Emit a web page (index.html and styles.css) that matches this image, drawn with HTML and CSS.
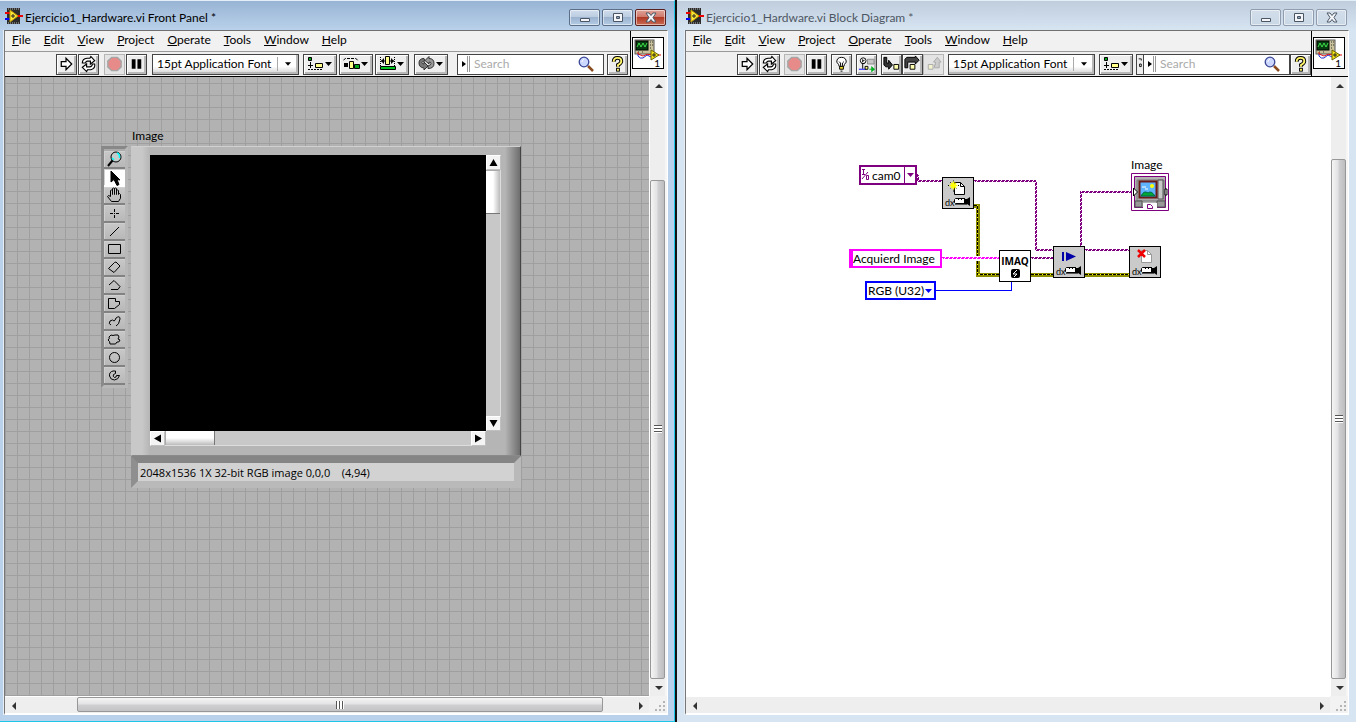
FILE: index.html
```html
<!DOCTYPE html>
<html lang="en">
<head>
<meta charset="utf-8">
<title>Ejercicio1_Hardware.vi</title>
<link rel="stylesheet" href="styles.css">
</head>
<body>
<svg class="sprite" aria-hidden="true">
  <symbol id="app" viewBox="0 0 18 16">
    <rect x="2" y="0" width="13" height="16" fill="#2b2b2b"/>
    <path d="M3 1h11M3 15h11" stroke="#bbb" stroke-dasharray="1 1"/>
    <path d="M0 11h6" stroke="#00f" stroke-width="2"/>
    <path d="M0 5h6M11 8h7" stroke="#e00" stroke-width="2"/>
    <path d="M5 2l8 6-8 6z" fill="#ffe93b" stroke="#b90"/>
    <path d="M6 8h4M8 6v4" stroke="#222"/>
  </symbol>
  <symbol id="vi" viewBox="0 0 30 30">
    <rect x="2" y="2" width="19" height="14" fill="#c9c29a" stroke="#555"/>
    <rect x="3" y="3" width="12" height="9" fill="#063c10" stroke="#000"/>
    <path d="M4 9l2-4 2 4 2-4 2 4 2-4" fill="none" stroke="#3fe04a"/>
    <path d="M17 4h1M17 7h1M17 10h1M19 4h1M19 7h1M5 14h1M9 14h1" stroke="#333" stroke-width="1"/>
    <path d="M5 16v2q2 3 5 2l4-3 4 2" fill="none" stroke="#1d2fd0"/>
    <path d="M5 14v2l5 2q4-3 9-1h9" fill="none" stroke="#e01010"/>
    <path d="M18 12l8 5-8 5z" fill="#f5e616" stroke="#6b6300"/>
    <path d="M19 17h4M21 15v4" stroke="#222"/>
  </symbol>
  <symbol id="run" viewBox="0 0 20 20"><path d="M4.500 7.500h5v-3.500l6 6-6 6v-3.500h-5z" fill="#fff" stroke="#000" stroke-width="1.300"/></symbol>
  <symbol id="cont" viewBox="0 0 20 20">
    <path d="M3.500 9q0-4.500 5-5h3l1-2 4 4.500-4.500 3.500v-3H9q-2 0-2 2z" fill="#fff" stroke="#000" stroke-width="1.200"/>
    <path d="M16.500 10q1 5-4 6H9l-1 2-4.500-4.500L8 10v3h3q3 0 3-3z" fill="#fff" stroke="#000" stroke-width="1.200"/>
  </symbol>
  <symbol id="stop" viewBox="0 0 20 20"><path d="M7 3h6l4 4v6l-4 4H7l-4-4V7z" fill="#e68a8a" stroke="#a5a5a5" stroke-width="1.500"/></symbol>
  <symbol id="pause" viewBox="0 0 20 20"><path d="M5 5h4v10H5zM11 5h4v10h-4z"/></symbol>
  <symbol id="caret" viewBox="0 0 7 4"><path d="M0 0h7L3.500 4z"/></symbol>
  <symbol id="align" viewBox="0 0 32 20">
    <path d="M4.500 3.500h3v3h-3z" fill="#00a51e" stroke="#000"/>
    <path d="M6.500 8v6M4 11.500h5" stroke="#000"/><path d="M4 15.500h15" stroke="#000" stroke-dasharray="2 1"/>
    <path d="M11.500 9.500h7v4h-7z" fill="#ffff8a" stroke="#000"/><path d="M21 8h7l-3.500 4z"/>
  </symbol>
  <symbol id="dist" viewBox="0 0 32 20">
    <path d="M3.500 6l2-1.500h10l3 2" fill="none" stroke="#000" stroke-dasharray="3 1"/><path d="M4 9h4v4H4z"/>
    <path d="M9.500 7.500h4v7h-4z" fill="#ffff8a" stroke="#000"/><path d="M14.500 10.500h5v4h-5z" fill="#00a51e" stroke="#000"/><path d="M21 8h7l-3.500 4z"/>
  </symbol>
  <symbol id="size" viewBox="0 0 32 20">
    <path d="M4.500 3v9M18.500 3v9" stroke="#000" stroke-dasharray="1 1"/>
    <path d="M5 7h13" stroke="#000"/><path d="M8 4v6L5 7zM15 4v6l3-3z"/><path d="M9.500 2.500h4v8h-4z" fill="#ffff8a" stroke="#000"/>
    <path d="M4.500 12.500h15v3h-15z" fill="#00c41e" stroke="#000"/><path d="M21 8h7l-3.500 4z"/>
  </symbol>
  <symbol id="order" viewBox="0 0 32 20">
    <path d="M9 4.500q-5 0-5 4.500t5 5v2l4-4-4-4v2q-2 0-2-1.500T10 7z" fill="#777" stroke="#333"/>
    <path d="M13 14.500q6 0 6-5t-5-5v-2l-4 4 4 3.500v-2q2 0 2 1.500T13 12z" fill="#999" stroke="#333"/>
    <path d="M21 8h7l-3.500 4z"/>
  </symbol>
  <symbol id="bulb" viewBox="0 0 20 20">
    <path d="M7.500 12.500q0-2-2.500-4.500 0-5 5-5t5 5q-2.500 2.500-2.500 4.500z" fill="#fff" stroke="#000"/>
    <path d="M9 12V9L7.500 7.500M11 12V9l1.500-1.500" fill="none" stroke="#000"/><path d="M8 12.500h4v3H8z" fill="#f0dc28" stroke="#000"/><path d="M9 17.500h2" stroke="#000"/>
  </symbol>
  <symbol id="retain" viewBox="0 0 20 20">
    <circle cx="6.500" cy="6.500" r="3" fill="#fff" stroke="#000"/><path d="M6 5v3M8 6l-2 1M6 10v5M5 9.500h3" stroke="#000"/>
    <path d="M11 5h7v5h-7z" fill="#c6c6c6" stroke="#888"/><path d="M2 15.500h8" stroke="#00f"/><path d="M8.500 12.500h3v3h-3z" fill="#ff8" stroke="#000"/><path d="M13 15.500h3" stroke="#0a0"/><path d="M15 12l4 3.500-4 3.500z" fill="#00b020"/>
  </symbol>
  <symbol id="into" viewBox="0 0 20 20"><path d="M2 3h3v6h2V6l4 5-4 4.500V13H4l-2-2z" fill="#333" stroke="#000"/><path d="M12.500 10.500h5v5h-5z" fill="#ffffb0" stroke="#000"/></symbol>
  <symbol id="over" viewBox="0 0 20 20"><path d="M2 14V5l2-2h9V1.500L17 6l-4 4V8H5v6z" fill="#444" stroke="#000"/><path d="M7.500 10.500h5v5h-5z" fill="#ffffb0" stroke="#000"/></symbol>
  <symbol id="out" viewBox="0 0 20 20"><path d="M4.500 10.500h5v5h-5z" fill="#f2f2cf" stroke="#aaa"/><path d="M11 14h5V8h2l-4-5-4 5h2v3h-1z" fill="#ccc" stroke="#aaa"/></symbol>
  <symbol id="find" viewBox="0 0 16 16"><path d="M10 10l5 5" stroke="#8a4b20" stroke-width="2.500"/><circle cx="6" cy="6" r="4.800" fill="#ccd8ff" stroke="#3b4796" stroke-width="1.300"/><path d="M4 6q0-2 2-3" fill="none" stroke="#fff"/></symbol>
  <symbol id="help" viewBox="0 0 20 20">
    <path d="M6 7.500q0-4 4-4t4 3.500q0 2-3.500 4v2" fill="none" stroke="#000" stroke-width="4"/><path d="M8.500 14h4v4h-4z"/>
    <path d="M6 7.500q0-4 4-4t4 3.500q0 2-3.500 4v2M10.500 15v2" fill="none" stroke="#fff56b" stroke-width="2"/>
  </symbol>
  <symbol id="cam" viewBox="0 0 32 32">
    <path d="M13.500 21.500h9v5h-9l-1-1v-3z" fill="#fff" stroke="#000"/><path d="M16 22.500h1M19 22.500h1" stroke="#000"/><path d="M22 21h1v1h2l3-2v9l-3-2h-2v1h-1z"/><path d="M13 27.500h12" stroke="#555"/>
  </symbol>
  <symbol id="page" viewBox="0 0 12 14"><path d="M.5.500h6l4 4v8H.5z" fill="#fff" stroke="currentColor"/><path d="M6.500.500v4h4" fill="none" stroke="currentColor"/></symbol>
</svg>

<main class="desktop">
<section class="window front">
  <header class="titlebar">
    <svg class="app"><use href="#app"/></svg><h1>Ejercicio1_Hardware.vi Front Panel *</h1>
    <div class="caption">
      <button aria-label="Minimize"><svg viewBox="0 0 12 12"><path d="M1.500 6.500h9v3h-9z"/></svg></button>
      <button aria-label="Maximize"><svg viewBox="0 0 12 12"><path d="M1.500 1.500h9v8h-9z"/><path d="M4.500 4.500h3v2h-3z" class="hole"/></svg></button>
      <button class="close" aria-label="Close"><svg viewBox="0 0 12 12"><path d="M1 1h3l2 2.500L8 1h3L8 5.500 11 10H8L6 7.500 4 10H1l3-4.500z"/></svg></button>
    </div>
  </header>
  <div class="client">
    <div class="head">
      <div class="bars">
        <nav class="menu"><button><u>F</u>ile</button><button><u>E</u>dit</button><button><u>V</u>iew</button><button><u>P</u>roject</button><button><u>O</u>perate</button><button><u>T</u>ools</button><button><u>W</u>indow</button><button><u>H</u>elp</button></nav>
        <div class="tools">
          <div class="set"><button class="tb" aria-label="Run"><svg><use href="#run"/></svg></button><button class="tb" aria-label="Run continuously"><svg><use href="#cont"/></svg></button></div>
          <div class="set"><button class="tb off" aria-label="Abort" disabled><svg><use href="#stop"/></svg></button><button class="tb" aria-label="Pause"><svg><use href="#pause"/></svg></button></div>
          <div class="font"><select aria-label="Font"><option>15pt Application Font</option></select><svg class="caret"><use href="#caret"/></svg></div>
          <div class="set wideset"><button class="tb wide" aria-label="Align"><svg><use href="#align"/></svg></button><button class="tb wide" aria-label="Distribute"><svg><use href="#dist"/></svg></button><button class="tb wide" aria-label="Resize"><svg><use href="#size"/></svg></button></div>
          <button class="tb wide" aria-label="Reorder"><svg><use href="#order"/></svg></button>
          <div class="search"><button aria-label="Search options"><svg viewBox="0 0 12 18"><path d="M4 6l4 3-4 3z"/><path d="M9.500 1v16M11.500 1v16" stroke="#999"/></svg></button><input type="search" placeholder="Search" aria-label="Search"><svg class="find"><use href="#find"/></svg></div>
          <button class="tb" aria-label="Help"><svg><use href="#help"/></svg></button>
        </div>
      </div>
      <div class="pane"><div class="vi"><svg><use href="#vi"/></svg><span>1</span></div></div>
    </div>
    <div class="view">
      <div class="canvas grid">
        <div class="viewer">
          <span class="label">Image</span>
          <div class="palette">
            <button aria-label="Zoom"><svg viewBox="0 0 21 18"><circle cx="12" cy="7" r="5" fill="#c4cccc"/><path d="M13 3q3 1 2.500 5M8 8l2 2" stroke="#0ff" stroke-width="1.500"/><path d="M8.500 10.500L4 16" stroke-width="2"/></svg></button>
            <button class="on" aria-label="Select"><svg viewBox="0 0 21 18"><path d="M7 3v11l3-2.500 3 6 2-1-2-5 3 .5z" fill="#000"/></svg></button>
            <button aria-label="Pan"><svg viewBox="0 0 21 18"><path d="M7.500 15.500l-4-5q1-2 3 0v-6q1-1 2 0v4-6q1-1 2 0v6-6q1-1 2 0v6-4q1-1 2 0v4q1-2 2 0 1 4-2 7z"/></svg></button>
            <button aria-label="Point"><svg viewBox="0 0 21 18"><path d="M6 9.500h3M12 9.500h3M10.500 5v3M10.500 11v3M10 9.500h1"/></svg></button>
            <button aria-label="Line"><svg viewBox="0 0 21 18"><path d="M6 14l9-9"/></svg></button>
            <button aria-label="Rectangle"><svg viewBox="0 0 21 18"><path d="M4.500 4.500h12v9h-12z"/></svg></button>
            <button aria-label="Rotated rectangle"><svg viewBox="0 0 21 18"><path d="M4.500 10.500l6-6 1.500-.5 4 4-6 6.500z"/></svg></button>
            <button aria-label="Broken line"><svg viewBox="0 0 21 18"><path d="M5 9l5-4.500 6 6-2 3H7"/></svg></button>
            <button aria-label="Polygon"><svg viewBox="0 0 21 18"><path d="M4.500 4.500h7v3h4v3l-5 4h-6z"/></svg></button>
            <button aria-label="Freehand line"><svg viewBox="0 0 21 18"><path d="M7 13q-3-1-1-4 3-2 4 0 1 0 2-3 4-3 4 1-1 6-4 7"/></svg></button>
            <button aria-label="Freehand region"><svg viewBox="0 0 21 18"><path d="M7 5q2 1 4 0 4-1 4 2l-1 2 2 1q-1 3-3 2-1 3-4 2H6q0-3-2-4 2-1 1-3z"/></svg></button>
            <button aria-label="Oval"><svg viewBox="0 0 21 18"><circle cx="10.500" cy="9.500" r="5"/></svg></button>
            <button aria-label="Annulus"><svg viewBox="0 0 21 18"><path d="M9 5q-4 1-3.500 5 1 4 5 4 4-.5 5-4.500h-3q0 2-2 2-2-1-1-3l2-1V5z"/></svg></button>
          </div>
          <div class="display">
            <div class="screen"></div>
            <div class="sb vert"><button aria-label="Up"><svg viewBox="0 0 15 15"><path d="M7.500 4l4 7h-8z"/></svg></button><div class="knob"></div><div class="track"></div><button aria-label="Down"><svg viewBox="0 0 15 15"><path d="M3.500 4h8l-4 7z"/></svg></button></div>
            <div class="sb horz"><button aria-label="Left"><svg viewBox="0 0 15 15"><path d="M4 7.500l7-4v8z"/></svg></button><div class="knob"></div><div class="track"></div><button aria-label="Right"><svg viewBox="0 0 15 15"><path d="M11 7.500l-7-4v8z"/></svg></button></div>
          </div>
          <output class="status">2048x1536 1X 32-bit RGB image 0,0,0 &nbsp;&nbsp; (4,94)</output>
        </div>
      </div>
      <div class="bar down"><button aria-label="Scroll up"><svg viewBox="0 0 8 6"><path d="M0 5h8L4 1z"/></svg></button><span class="before"></span><span class="thumb"><i></i></span><button aria-label="Scroll down"><svg viewBox="0 0 8 6"><path d="M0 1h8L4 5z"/></svg></button></div>
      <div class="bar across"><button aria-label="Scroll left"><svg viewBox="0 0 6 8"><path d="M5 0v8L1 4z"/></svg></button><span class="before"></span><span class="thumb"><i></i></span><span class="after"></span><button aria-label="Scroll right"><svg viewBox="0 0 6 8"><path d="M1 0v8l4-4z"/></svg></button></div>
      <svg class="resize" viewBox="0 0 18 17"><path d="M14 6h2M10 10h2M14 10h2M6 14h2M10 14h2M14 14h2" stroke="#b5b5b5" stroke-width="2"/></svg>
    </div>
  </div>
</section>

<section class="window block">
  <header class="titlebar">
    <svg class="app"><use href="#app"/></svg><h1>Ejercicio1_Hardware.vi Block Diagram *</h1>
    <div class="caption">
      <button aria-label="Minimize"><svg viewBox="0 0 12 12"><path d="M1.500 6.500h9v3h-9z"/></svg></button>
      <button aria-label="Maximize"><svg viewBox="0 0 12 12"><path d="M1.500 1.500h9v8h-9z"/><path d="M4.500 4.500h3v2h-3z" class="hole"/></svg></button>
      <button aria-label="Close"><svg viewBox="0 0 12 12"><path d="M1 1h3l2 2.500L8 1h3L8 5.500 11 10H8L6 7.500 4 10H1l3-4.500z"/></svg></button>
    </div>
  </header>
  <div class="client">
    <div class="head">
      <div class="bars">
        <nav class="menu"><button><u>F</u>ile</button><button><u>E</u>dit</button><button><u>V</u>iew</button><button><u>P</u>roject</button><button><u>O</u>perate</button><button><u>T</u>ools</button><button><u>W</u>indow</button><button><u>H</u>elp</button></nav>
        <div class="tools">
          <div class="set"><button class="tb" aria-label="Run"><svg><use href="#run"/></svg></button><button class="tb" aria-label="Run continuously"><svg><use href="#cont"/></svg></button></div>
          <div class="set"><button class="tb off" aria-label="Abort" disabled><svg><use href="#stop"/></svg></button><button class="tb" aria-label="Pause"><svg><use href="#pause"/></svg></button></div>
          <button class="tb" aria-label="Highlight execution"><svg><use href="#bulb"/></svg></button>
          <button class="tb" aria-label="Retain wire values"><svg><use href="#retain"/></svg></button>
          <div class="set steps"><button class="tb" aria-label="Step into"><svg><use href="#into"/></svg></button><button class="tb" aria-label="Step over"><svg><use href="#over"/></svg></button><button class="tb off" aria-label="Step out" disabled><svg><use href="#out"/></svg></button></div>
          <div class="font"><select aria-label="Font"><option>15pt Application Font</option></select><svg class="caret"><use href="#caret"/></svg></div>
          <button class="tb wide" aria-label="Align"><svg><use href="#align"/></svg></button>
          <button class="tb cut" aria-label="Distribute"><svg viewBox="0 0 7 20"><path d="M2 4h3v2M3 10h2v3H3z" fill="none" stroke="#000"/></svg></button>
          <div class="search"><button aria-label="Search options"><svg viewBox="0 0 12 18"><path d="M4 6l4 3-4 3z"/><path d="M9.500 1v16M11.500 1v16" stroke="#999"/></svg></button><input type="search" placeholder="Search" aria-label="Search"><svg class="find"><use href="#find"/></svg></div>
          <button class="tb" aria-label="Help"><svg><use href="#help"/></svg></button>
        </div>
      </div>
      <div class="pane"><div class="vi"><svg><use href="#vi"/></svg><span>1</span></div></div>
    </div>
    <div class="view">
      <div class="canvas">
        <div class="diagram">
          <svg class="wires" viewBox="846 157 330 150">
            <g fill="none" stroke="#7f007f" stroke-dasharray="3 1" shape-rendering="crispEdges">
              <g id="w"><path d="M917.500 174v6.500H942M974 180.500h61.500v69H1053M1031 257.500h22M1080.500 246v-54.500H1131M1085 249.500h44"/><path d="M942 257.500h57" stroke="#f0f"/></g>
              <use href="#w" x="1" y="1" stroke-dashoffset="2"/>
            </g>
            <g fill="none" shape-rendering="crispEdges">
              <path d="M974 205.500h3.500V256M977.500 261v13.500M976 274.500h23M1031 274.500h22M1085 274.500h44" stroke="#8c8c00" stroke-width="4"/>
              <path d="M974 205.500h3.500V256M977.500 261v13.500M978 274.500h21M1031 274.500h22M1085 274.500h44" stroke="#ff0"/>
              <path d="M974 205.500h3.500V256M977.500 261v13.500M980 274.500h19M1031 274.500h22M1085 274.500h44" stroke="#000" stroke-dasharray="3 1"/>
              <path d="M936 290.500h75.500V282" stroke="#00f"/>
            </g>
          </svg>
          <div class="ring io"><svg class="iomark" viewBox="0 0 9 12"><path d="M1 .5h3M2.500 0v6M1 5.500h3M1 10l6-7M5.500 6.500h2v4h-2z" fill="none" stroke="#7f007f"/></svg><select aria-label="Camera"><option>cam0</option></select><svg class="caret"><use href="#caret"/></svg></div>
          <div class="node open"><svg viewBox="0 0 32 32"><use href="#page" x="12" y="5" width="12" height="14"/><path d="M11.500 3.500v11M6 8.500h11M8 5l7 7M15 5l-7 7" stroke="#000" stroke-dasharray="1 1"/><path d="M11.500 4.500v8M7.500 8.500h8M9 6l5 5M14 6l-5 5" stroke="#ff0" stroke-width="1.500"/><use href="#cam"/><text x="3" y="29">dx</text></svg></div>
          <div class="node imaq"><b>IMAQ</b><svg viewBox="0 0 10 10"><rect x="1" width="9" height="9" rx="2"/><path d="M7 1L3 5h4L4 8" fill="none" stroke="#fff"/></svg></div>
          <div class="node snap"><svg viewBox="0 0 32 32"><path d="M9 6h2v9H9zM13 6l10 4.500L13 15z" fill="#0000a8"/><use href="#cam"/><text x="3" y="29">dx</text></svg></div>
          <div class="node shut"><svg viewBox="0 0 32 32"><g color="#999"><use href="#page" x="12" y="4" width="12" height="14"/></g><path d="M9 4l7 7M16 4l-7 7" stroke="#f00000" stroke-width="2.500"/><use href="#cam"/><text x="3" y="29">dx</text></svg></div>
          <input class="text" aria-label="Image name" value="Acquierd Image">
          <div class="ring enum"><select aria-label="Image type"><option>RGB (U32)</option></select><svg class="caret"><use href="#caret"/></svg></div>
          <span class="name">Image</span>
          <svg class="terminal" viewBox="0 0 38 38">
            <path d="M.5.5h37v37H.5z" fill="#fff" stroke="#7f007f"/><path d="M3.500 3.500h31v31h-31z" fill="#b4b4b4" stroke="#7f007f"/>
            <path d="M6 7h27v21H6z" fill="#aaa" stroke="#777"/><path d="M27 7h5v19h-5z" fill="#c8c8c8" stroke="#555"/><path d="M4 28h7v6H4zM26 28h8v6h-8z" fill="#999" stroke="#555"/>
            <path d="M8.500 8.500h17v16h-17z" fill="#5eb4ff" stroke="#6b1818" stroke-width="2"/><circle cx="21" cy="13" r="2" fill="#ff0"/><path d="M10 23q3-6 7-3 3-3 7 3z" fill="#00a838" stroke="#064"/><path d="M11 14h4M14 16h3" stroke="#fff"/>
            <path d="M12 30h14v5H12z" fill="#fff"/><path d="M16.500 31.500h3l2 2v2h-5z" fill="#fff" stroke="#7f007f"/><path d="M2.500 15l4 4-4 4zM34 16h2v6h-2z" fill="#fff" stroke="#000"/>
          </svg>
        </div>
      </div>
      <div class="bar down"><button aria-label="Scroll up"><svg viewBox="0 0 8 6"><path d="M0 5h8L4 1z"/></svg></button><span class="before"></span><span class="thumb"><i></i></span><button aria-label="Scroll down"><svg viewBox="0 0 8 6"><path d="M0 1h8L4 5z"/></svg></button></div>
      <div class="bar across"><button aria-label="Scroll left"><svg viewBox="0 0 6 8"><path d="M5 0v8L1 4z"/></svg></button><span class="after"></span><button aria-label="Scroll right"><svg viewBox="0 0 6 8"><path d="M1 0v8l4-4z"/></svg></button></div>
      <svg class="resize" viewBox="0 0 18 17"><path d="M14 6h2M10 10h2M14 10h2M6 14h2M10 14h2M14 14h2" stroke="#b5b5b5" stroke-width="2"/></svg>
    </div>
  </div>
</section>
</main>
</body>
</html>
```
FILE: styles.css
```css
* { box-sizing: border-box; }
body { margin: 0; font: 12px/16px Lato, "Open Sans", sans-serif; color: #000; }
button, input, select { font: inherit; color: inherit; margin: 0; padding: 0; border: 0; background: none; border-radius: 0; }
select { appearance: none; }
button { display: flex; align-items: center; justify-content: center; }
svg { display: block; }
.sprite { position: absolute; width: 0; height: 0; }

.desktop { display: grid; grid-template-columns: minmax(0, 675fr) minmax(0, 679fr); gap: 2px; height: 100vh; background: #111; }
.window { display: flex; flex-direction: column; min-width: 0; border-top: 1px solid #e4eef8; }
.front { background: #b9d1ea; border-right: 1px solid #1cc6e8; border-bottom: 1px solid #1cc6e8; padding: 0 6px 6px 4px; }
.block { background: #d7e4f2; padding: 0 7px 7px 8px; }
.front .titlebar { background: linear-gradient(#98b4d4, #b9d1ea); margin: 0 -6px 0 -4px; padding: 0 8px 0 5px; }
.block .titlebar { background: linear-gradient(#bfcddc, #d7e4f2); margin: 0 -7px 0 -8px; padding: 0 9px 0 9px; }

.titlebar { display: flex; align-items: center; height: 29px; gap: 2px; }
.app { width: 18px; height: 16px; }
h1 { margin: 0; flex: 1; font-size: 12px; font-weight: 400; padding-top: 4px; white-space: nowrap; }
.block h1 { color: #4d5763; }
.caption { display: flex; gap: 2px; padding-top: 4px; }
.caption button { width: 31px; height: 17px; border: 1px solid #5c6f88; border-radius: 2px; background: linear-gradient(#cfdcec, #bccde1 45%, #9bb3cf 50%, #b4cbe4); box-shadow: inset 0 0 0 1px #ffffff80; }
.block .caption button { border-color: #8f9dae; background: linear-gradient(#d3deea, #c9d7e6); }
.front .caption .close { border-color: #5a2020; background: linear-gradient(#e0a298, #cf7a6c 45%, #b03a26 50%, #c96b54); }
.caption svg { width: 12px; height: 12px; fill: #f4f6fa; stroke: #4b5665; }
.caption .hole { fill: #8ca0ba; }

.client { flex: 1; display: flex; flex-direction: column; min-height: 0; border: 1px solid #fff; border-left-color: #777; border-top-color: #707070; border-bottom-width: 2px; background: #f0f0f0; box-shadow: -1px 0 #e6eef6; }
.head { display: flex; border-bottom: 1px solid #000; }
.bars { flex: 1; min-width: 0; }
.menu { display: flex; height: 21px; border-bottom: 1px solid #999; background: #f1f1f1; }
.menu button { padding: 0 6px 2px 7px; display: block; line-height: 18px; }
.tools { display: flex; align-items: center; height: 24px; padding-left: 51px; gap: 4px; }
.set { display: flex; gap: 1px; margin-right: 1px; }
.block .set { margin-right: 0; }
.set.steps { gap: 0; }
.wideset { gap: 2px; }
.tb { flex: none; width: 21px; height: 21px; border: 1px solid #444; background: #eee; box-shadow: inset 1px 1px #fff, inset -2px -2px #b8b8b8; }
.tb svg { width: 20px; height: 20px; }
.off { border-color: #b5b5b5; background: #e4e4e4; box-shadow: none; }
.wide { width: 34px; }
.wide svg { width: 32px; }
.cut { width: 8px; margin-left: -1px; margin-right: -5px; box-shadow: none; }
.cut svg { width: 7px; }
.font { flex: none; display: flex; align-items: center; width: 147px; height: 21px; border: 1px solid #444; padding-left: 4px; background: linear-gradient(#fff, #fff 60%, #d0d0d0); box-shadow: inset -2px -2px #b8b8b8; }
.font select { flex: 1; min-width: 0; height: 18px; }
.font .caret { width: 21px; height: 14px; padding: 5px 7px; border-left: 1px solid #aaa; }
.search { flex: none; display: flex; align-items: center; width: 147px; height: 21px; margin-left: auto; margin-right: -1px; border: 1px solid #444; background: #fff; }
.block .search { margin-right: -4px; }
.search button { width: 12px; height: 18px; }
.search button svg { width: 12px; height: 18px; }
.search input { flex: 1; min-width: 0; padding-left: 4px; appearance: none; outline: 0; }
.search input::placeholder { color: #aaa; }
.find { width: 16px; height: 16px; margin-right: 9px; }
.tools > .tb:last-child { margin-right: 2px; }
.pane { border-left: 1px solid #000; padding: 6px 3px 7px 1px; }
.vi { position: relative; width: 32px; height: 32px; border: 1px solid #000; background: #fff; }
.vi svg { width: 30px; height: 30px; }
.vi span { position: absolute; right: 3px; bottom: 0; font-size: 10px; line-height: 10px; }

.view { flex: 1; display: grid; grid-template: minmax(0, 1fr) 17px / minmax(0, 1fr) 18px; min-height: 0; }
.canvas { position: relative; overflow: hidden; background: #fff; }
.grid { background: linear-gradient(#9f9f9f 1px, transparent 1px) 0 6px / 12px 12px, linear-gradient(90deg, #9f9f9f 1px, transparent 1px) 0 0 / 12px 12px, #b2b2b2; }
.bar { display: flex; background: #eee; }
.bar button { flex: none; width: 17px; height: 17px; }
.bar button svg { width: 8px; height: 8px; fill: #333; }
.down { flex-direction: column; border-left: 1px solid #fff; border-right: 2px solid #f6f6f6; }
.across { border-top: 1px solid #fff; }
.before { flex: 86 1 0; }
.thumb { flex: 498 1 0; display: flex; align-items: center; justify-content: center; border: 1px solid #979797; border-radius: 2px; }
.down .thumb { background: linear-gradient(90deg, #f5f5f5, #e2e2e4 45%, #cfcfd2 55%, #bdbdc0); width: 15px; }
.block .down .before { flex-grow: 65; }
.block .down .thumb { flex-grow: 519; }
.thumb i { width: 8px; height: 8px; background: repeating-linear-gradient(#555 0 1px, #fff 1px 3px); }
.across .thumb { height: 15px; background: linear-gradient(#f5f5f5, #e4e4e6 45%, #cfcfd2 55%, #c3c3c6); flex-grow: 526; }
.across .thumb i { background: repeating-linear-gradient(90deg, #555 0 1px, #fff 1px 3px); }
.across .before { flex-grow: 55; }
.after { flex: 29 1 0; }
.resize { width: 18px; height: 17px; background: #f2f2f2; }

.viewer { position: absolute; left: 96px; top: 50px; display: grid; grid-template-columns: 27px 390px; column-gap: 3px; }
.label { grid-column: 2; height: 19px; line-height: 18px; padding-left: 1px; }
.palette { grid-row: 2 / 4; align-self: start; border: 3px solid; border-color: #888 #b8b8b8 #b8b8b8 #8a8a8a; background: #ababab; padding: 2px 0 0; }
.palette button { width: 21px; height: 18px; background: linear-gradient(#c8c8c8, #b8b8b8); border-bottom: 2px solid #828282; box-shadow: inset 1px 1px #d0d0d0; }
.palette .on { background: #fff; border-color: #fff; }
.palette svg { flex: none; width: 21px; height: 18px; fill: none; stroke: #000; }
.display { display: grid; grid-template: 276px 15px / 336px 15px; padding: 8px 0 10px 18px; height: 310px; border: 1px solid; border-color: #d0d0d0 #444 #8a8a8a #c8c8c8; background: linear-gradient(90deg, #c8c8c8 0 10px, #b5b5b5 18px 373px, #6e6e6e 100%); }
.screen { background: #000; }
.sb { display: flex; background: #c8c8c8; }
.sb button { flex: none; width: 15px; height: 15px; background: #f4f4f4; border: 1px solid; border-color: #fff #c0c0c0 #c0c0c0 #fff; }
.sb button svg { width: 15px; height: 15px; flex: none; }
.vert { flex-direction: column; border-right: 1px solid #ddd; }
.knob { flex: none; }
.track { flex: 1; }
.vert .knob { height: 44px; background: linear-gradient(90deg, #fff 50%, #bbb); border-top: 1px solid #aaa; border-bottom: 1px solid #777; }
.horz { border-bottom: 1px solid #ddd; }
.horz .knob { width: 50px; background: linear-gradient(#fff 50%, #bbb); border-left: 1px solid #aaa; border-right: 1px solid #777; }
.status { grid-column: 2; border: 7px solid; border-color: #858585 #b9b9b9 #b9b9b9 #8f8f8f; background: #d2d2d2; height: 32px; font: 11px/19px "Open Sans", sans-serif; padding-left: 2px; white-space: pre; }

.diagram { position: absolute; left: 160px; top: 80px; width: 330px; height: 150px; }
.diagram > * { position: absolute; }
.wires { left: 0; top: 0; width: 330px; height: 150px; }
.node { width: 32px; height: 32px; border: 1px solid #000; background: #cacaca; }
.node > svg { width: 32px; height: 32px; margin: -1px; }
.node text { font-size: 9px; }
.open { left: 96px; top: 20px; }
.imaq { left: 153px; top: 93px; background: #fff; display: flex; flex-direction: column; align-items: center; padding-top: 3px; }
.imaq b { font: 700 10px/14px "Open Sans", sans-serif; }
.imaq > svg { width: 10px; height: 10px; margin: 1px 0 0; }
.snap { left: 207px; top: 89px; }
.shut { left: 283px; top: 89px; }
.ring { display: flex; align-items: center; background: #fff; }
.ring select { flex: 1; min-width: 0; height: 15px; line-height: 15px; }
.ring .caret { width: 7px; height: 4px; }
.io { left: 13px; top: 8px; width: 58px; height: 20px; border: 2px solid #7f007f; fill: #7f007f; }
.io .iomark { width: 9px; height: 12px; margin-right: 2px; }
.io .caret { width: 11px; height: 16px; padding: 6px 1px 6px 2px; border-left: 1px solid #7f007f; }
.text { left: 3px; top: 92px; width: 93px; height: 19px; border: 2px solid #f0f; border-left-width: 4px; background: #fff; line-height: 15px; }
.enum { left: 19px; top: 124px; width: 71px; height: 19px; border: 2px solid #00f; padding: 0 2px 0 1px; fill: #00f; }
.name { left: 285px; top: 0; }
.terminal { left: 285px; top: 16px; width: 38px; height: 38px; }
```
